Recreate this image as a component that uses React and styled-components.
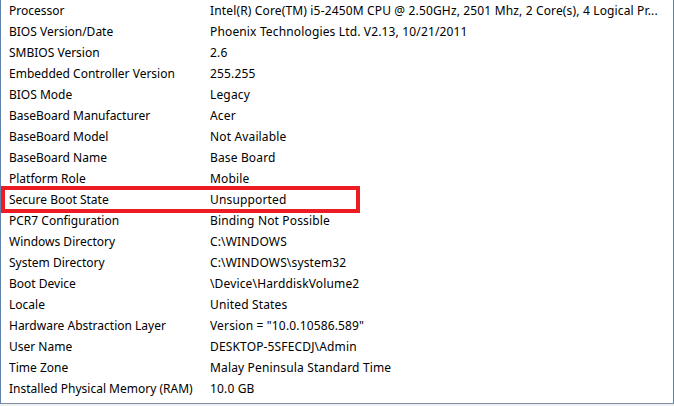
import React from 'react';
import styled, { createGlobalStyle } from 'styled-components';

const GlobalStyle = createGlobalStyle`
    html, body {
        margin: 0;
        padding: 0;
        background: #f0f0f0;
    }
`;

const ListBox = styled.div`
    box-sizing: border-box;
    width: 674px;
    height: 404px;
    background: #ffffff;
    border-left: 1px solid #5f82ad;
    border-right: 1px solid #5f82ad;
    border-bottom: 1px solid #7a8ea6;
    font-family: "Noto Sans", "Open Sans", sans-serif;
    font-size: 12px;
    color: #000000;
    overflow: hidden;
`;

const Row = styled.div`
    position: relative;
    display: grid;
    grid-template-columns: 201px 1fr;
    height: 21px;
    line-height: 21px;
    padding-left: 8px;

    &::after {
        content: '';
        display: ${p => (p.$marked ? 'block' : 'none')};
        position: absolute;
        left: 0;
        top: -3px;
        width: 359px;
        height: 27px;
        box-sizing: border-box;
        border: 4px solid #ed1c24;
        pointer-events: none;
    }
`;

const Cell = styled.span`
    white-space: nowrap;
    overflow: hidden;
    text-overflow: ellipsis;
    padding-right: 4px;
    letter-spacing: ${p => (p.$value ? '0.15px' : '0')};
`;

const items = [
    ['Processor', 'Intel(R) Core(TM) i5-2450M CPU @ 2.50GHz, 2501 Mhz, 2 Core(s), 4 Logical Pr...'],
    ['BIOS Version/Date', 'Phoenix Technologies Ltd. V2.13, 10/21/2011'],
    ['SMBIOS Version', '2.6'],
    ['Embedded Controller Version', '255.255'],
    ['BIOS Mode', 'Legacy'],
    ['BaseBoard Manufacturer', 'Acer'],
    ['BaseBoard Model', 'Not Available'],
    ['BaseBoard Name', 'Base Board'],
    ['Platform Role', 'Mobile'],
    ['Secure Boot State', 'Unsupported', true],
    ['PCR7 Configuration', 'Binding Not Possible'],
    ['Windows Directory', 'C:\\WINDOWS'],
    ['System Directory', 'C:\\WINDOWS\\system32'],
    ['Boot Device', '\\Device\\HarddiskVolume2'],
    ['Locale', 'United States'],
    ['Hardware Abstraction Layer', 'Version = "10.0.10586.589"'],
    ['User Name', 'DESKTOP-5SFECDJ\\Admin'],
    ['Time Zone', 'Malay Peninsula Standard Time'],
    ['Installed Physical Memory (RAM)', '10.0 GB'],
];

const App = () => {
    return (
        <>
            <GlobalStyle />
            <ListBox>
                {items.map(([name, value, marked]) => (
                    <Row key={name} $marked={marked}>
                        <Cell>{name}</Cell>
                        <Cell $value>{value}</Cell>
                    </Row>
                ))}
            </ListBox>
        </>
    );
};

export default App;
